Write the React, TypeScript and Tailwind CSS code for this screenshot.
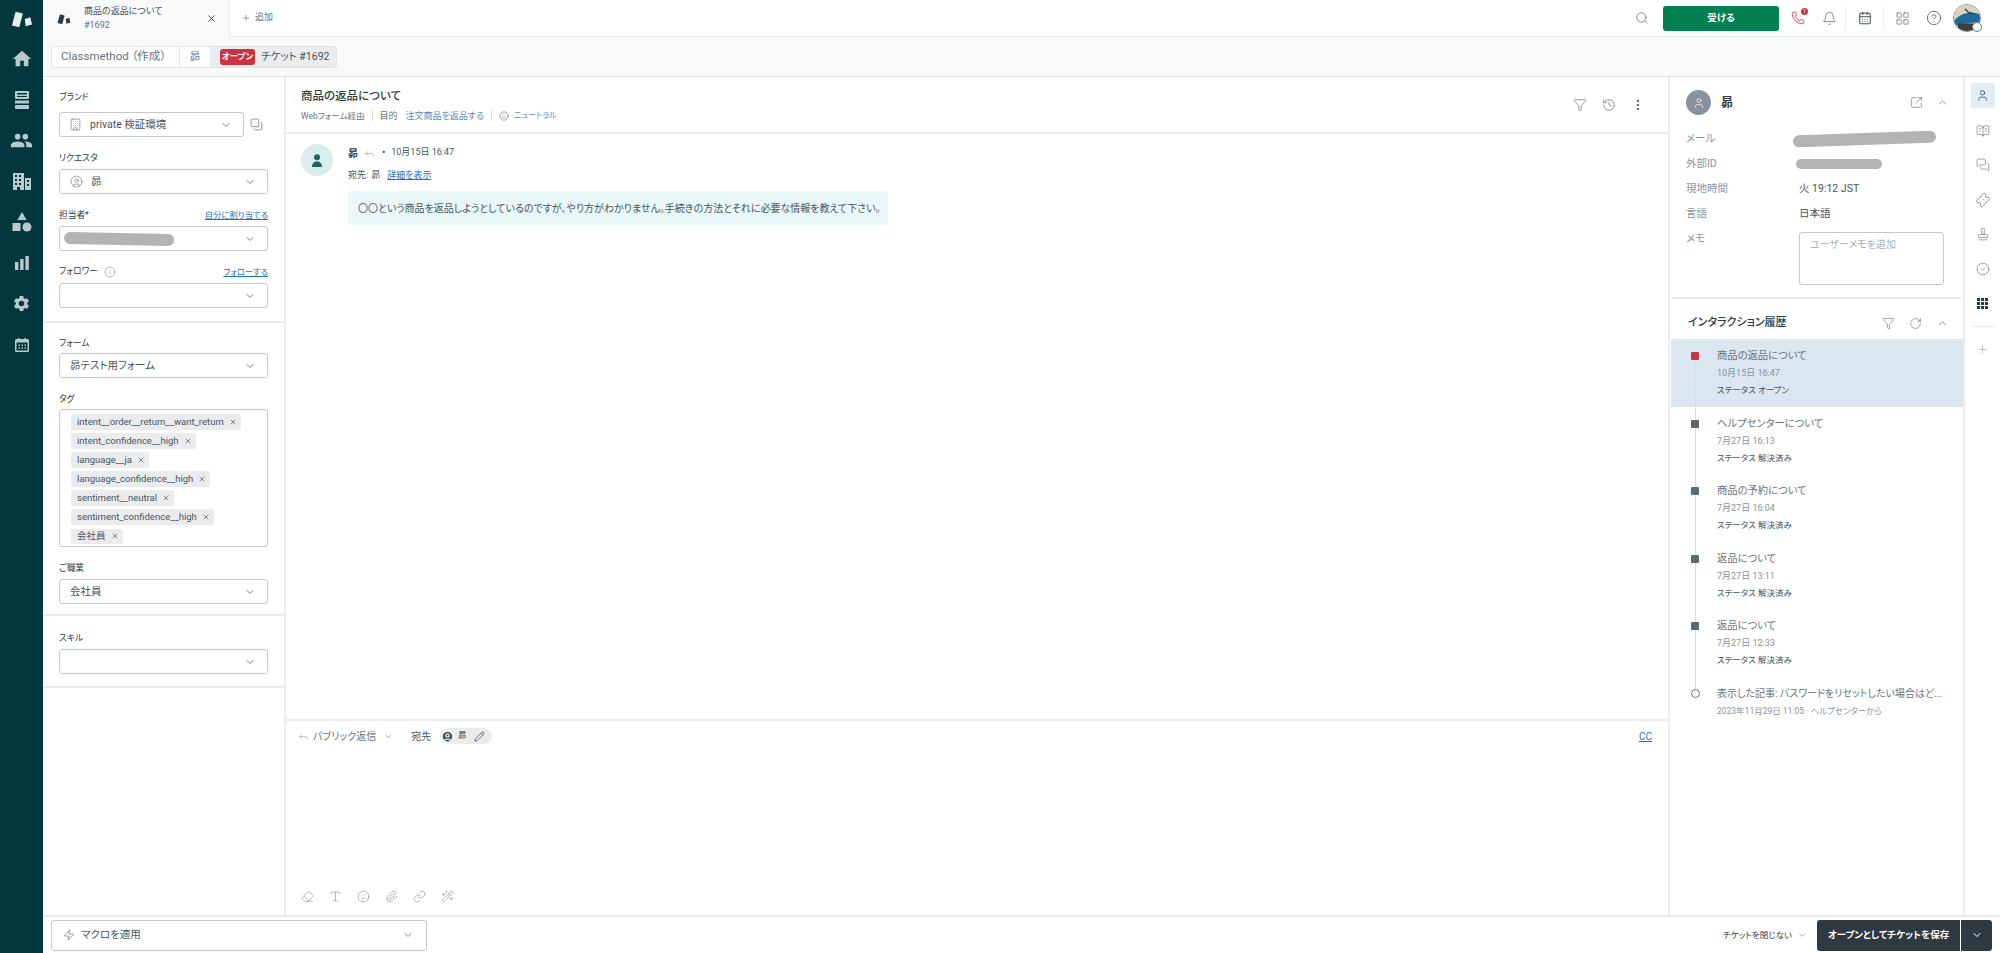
import {
  Bell,
  BookOpenText,
  Building,
  CalendarDays,
  ChevronDown,
  ChevronUp,
  CircleCheck,
  CircleHelp,
  CircleUser,
  Copy,
  EllipsisVertical,
  Eraser,
  Funnel,
  History,
  Info,
  LayoutGrid,
  Link,
  MessagesSquare,
  Paperclip,
  Pencil,
  Phone,
  Plus,
  Reply,
  RotateCw,
  Search,
  Smile,
  SquareArrowOutUpRight,
  Stamp,
  Ticket,
  Type,
  User,
  WandSparkles,
  X,
  Zap,
} from "lucide-react";
import { MdHome, MdPeople, MdSettings } from "react-icons/md";
import type { ReactNode } from "react";

const ZendeskLogo = ({ size, color }: { size: number; color: string }) => (
  <svg width={size} height={size} viewBox="0 0 24 24" fill={color}>
    <path d="M5 4 L13 6 L9 21 L1 19 Z" />
    <path d="M15 12 L21 10 L23 18 L16 20 Z" />
  </svg>
);

const NavRail = () => (
  <nav className="w-[43px] shrink-0 bg-[#03363d] flex flex-col items-center text-[#b9cacc]">
    <div className="h-[38px] flex items-center">
      <ZendeskLogo size={22} color="#e6eced" />
    </div>
    <div className="h-[41px] flex items-center">
      <MdHome size={22} />
    </div>
    <div className="h-[41px] flex items-center">
      <svg width="16" height="18" viewBox="0 0 16 18" fill="currentColor">
        <path d="M2 0h12a1 1 0 0 1 1 1v6a1 1 0 0 1-1 1H2a1 1 0 0 1-1-1V1a1 1 0 0 1 1-1zm1 2v1.500h10V2zM3 5v1h10V5z" fillRule="evenodd" />
        <rect x="1" y="9.500" width="14" height="3" />
        <rect x="1" y="14" width="14" height="4" rx="1" />
      </svg>
    </div>
    <div className="h-[41px] flex items-center">
      <MdPeople size={23} />
    </div>
    <div className="h-[41px] flex items-center">
      <svg width="18" height="17" viewBox="0 0 18 17" fill="currentColor">
        <path d="M0 0h11v17H0zM2 2v2h2V2zm4 0v2h2V2zM2 6v2h2V6zm4 0v2h2V6zM2 10v2h2v-2zm4 0v2h2v-2zM4 14v3h3v-3zM12 5h6v12h-6zm2 2v2h2V7zm0 4v2h2v-2z" fillRule="evenodd" />
      </svg>
    </div>
    <div className="h-[40px] flex items-center">
      <svg width="20" height="20" viewBox="0 0 20 20" fill="currentColor">
        <path d="M10 0l4.600 8H5.400z" />
        <rect x="0.500" y="11" width="8" height="8" rx="0.500" />
        <circle cx="15" cy="15" r="4.500" />
      </svg>
    </div>
    <div className="h-[41px] flex items-center">
      <svg width="14" height="14" viewBox="0 0 14 14" fill="currentColor">
        <rect x="0" y="6" width="3.400" height="8" />
        <rect x="5.200" y="3" width="3.400" height="11" />
        <rect x="10.400" y="0" width="3.400" height="14" />
      </svg>
    </div>
    <div className="h-[41px] flex items-center">
      <MdSettings size={19} />
    </div>
    <div className="h-[41px] flex items-center">
      <svg width="14" height="14" viewBox="0 0 14 14" fill="currentColor">
        <path d="M1.500 1H3V0h1.500v1h5V0H11v1h1.500A1.500 1.500 0 0 1 14 2.500v10a1.500 1.500 0 0 1-1.500 1.500h-11A1.500 1.500 0 0 1 0 12.500v-10A1.500 1.500 0 0 1 1.500 1zM1.500 4.500v8h11v-8zM3.500 6.500h1.500V8H3.500zm3 0H8V8H6.500zm3 0H11V8H9.500zm-6 2.800h1.500v1.500H3.500zm3 0H8v1.500H6.500zm3 0H11v1.500H9.500z" fillRule="evenodd" />
      </svg>
    </div>
  </nav>
);

const TopBar = () => (
  <header className="h-[37px] shrink-0 flex bg-white">
    <div className="w-[187px] shrink-0 bg-[#f8f9f9] border-r border-[#e9ebed] flex items-center pl-[14px] pr-[12px]">
      <ZendeskLogo size={14} color="#2f3941" />
      <div className="ml-[13px] -mt-[2px] flex-1 flex flex-col gap-[2px] text-[#49545c] leading-[12px]">
        <span className="text-[9px]">商品の返品について</span>
        <span className="text-[9px] text-[#68737d]">#1692</span>
      </div>
      <X size={11} strokeWidth={2} className="text-[#2f3941]" />
    </div>
    <div className="flex-1 flex items-center pr-[19px] border-b border-[#e9ebed]">
      <div className="ml-[11px] flex items-center gap-[4px] text-[#68737d] text-[9px]">
        <Plus size={10} strokeWidth={1.5} />
        <span>追加</span>
      </div>
      <div className="ml-auto flex items-center">
        <Search size={14} strokeWidth={1.4} className="text-[#68737d]" />
        <button className="ml-[14px] w-[116px] h-[25px] rounded-[3px] bg-[#037f52] text-white text-[9.500px] font-bold">受ける</button>
        <div className="ml-[7px] w-[24px] flex justify-center relative">
          <Phone size={14} strokeWidth={1.4} className="text-[#cc3340]" />
          <span className="absolute right-[2px] top-[-3px] w-[7px] h-[7px] rounded-full bg-[#cc3340] text-white text-[5px] leading-[7px] text-center">1</span>
        </div>
        <Bell size={15} strokeWidth={1.3} className="ml-[12px] text-[#68737d]" />
        <div className="ml-[8px] w-px h-[22px] bg-[#e9ebed]" />
        <CalendarDays size={14} strokeWidth={1.8} className="ml-[12px] text-[#49545c]" />
        <div className="ml-[11px] w-px h-[22px] bg-[#e9ebed]" />
        <LayoutGrid size={15} strokeWidth={1.2} className="ml-[11px] text-[#68737d]" />
        <CircleHelp size={16} strokeWidth={1.2} className="ml-[16px] text-[#49545c]" />
        <div className="ml-[11px] w-[28px] h-[28px] rounded-full border border-[#87929d] relative">
          <svg viewBox="0 0 28 28" className="w-full h-full rounded-full">
            <rect width="28" height="28" fill="#d8d4c4" />
            <path d="M0 17 C8 8 18 7 28 10 L28 18 L0 22Z" fill="#1f6c9b" />
            <path d="M4 20h20v8H4z" fill="#3b3f3a" />
            <path d="M12 4 C14 8 18 9 21 9" stroke="#33393c" strokeWidth="1.500" fill="none" />
          </svg>
          <span className="absolute right-[-2px] bottom-[-1px] w-[10px] h-[10px] rounded-full bg-white border border-[#68737d]" />
        </div>
      </div>
    </div>
  </header>
);

const Crumbs = () => (
  <div className="h-[40px] shrink-0 bg-[#f8f9f9] border-b border-[#e0e3e5] flex items-center pl-[8px]">
    <div className="flex h-[22px] rounded-[3px] border border-[#e0e3e5] overflow-hidden text-[#68737d] text-[10.500px] whitespace-nowrap">
      <div className="w-[128px] bg-white flex items-center pl-[9px] border-r border-[#e0e3e5] text-[11.500px]">Classmethod （作成）</div>
      <div className="w-[30px] bg-white flex items-center justify-center">昴</div>
      <div className="w-[126px] bg-[#e9ebed] flex items-center pl-[10px] gap-[6px] text-[#49545c]">
        <span className="h-[16px] w-[35px] justify-center rounded-[3px] bg-[#cc3340] text-white text-[8.500px] font-bold flex items-center">オープン</span>
        <span>チケット #1692</span>
      </div>
    </div>
  </div>
);

const SelectBox = ({ children, className = "w-[209px]" }: { children?: ReactNode; className?: string }) => (
  <div className={`h-[25px] ${className} rounded-[3px] border border-[#c2c8cc] bg-white flex items-center pl-[10px] pr-[11px] text-[10.500px] text-[#49545c]`}>
    <div className="flex-1 flex items-center gap-[8px] min-w-0">{children}</div>
    <ChevronDown size={12} strokeWidth={1.5} className="text-[#49545c]" />
  </div>
);

const FieldLabel = ({ children, action }: { children: ReactNode; action?: ReactNode }) => (
  <div className="h-[16px] flex items-center justify-between text-[8.700px] text-[#2f3941]">
    <div className="flex items-center gap-[6px]">{children}</div>
    {action && <span className="text-[#1f73b7] underline text-[8.300px]">{action}</span>}
  </div>
);

const tags = [
  "intent__order__return__want_return",
  "intent_confidence__high",
  "language__ja",
  "language_confidence__high",
  "sentiment__neutral",
  "sentiment_confidence__high",
  "会社員",
];

const TicketFields = () => (
  <aside className="w-[243px] shrink-0 border-r-2 border-[#e9ebed] flex flex-col">
    <section className="px-[16px] pt-[13px] h-[246px] border-b-2 border-[#e9ebed] flex flex-col">
      <FieldLabel>ブランド</FieldLabel>
      <div className="mt-[6px] flex items-center gap-[6px]">
        <SelectBox className="w-[185px]">
          <Building size={13} strokeWidth={1.2} className="text-[#68737d] -ml-[1px]" />
          <span>private 検証環境</span>
        </SelectBox>
        <Copy size={13} strokeWidth={1.3} className="text-[#68737d] -scale-x-100 -scale-y-100" />
      </div>
      <div className="mt-[13.500px]">
        <FieldLabel>リクエスタ</FieldLabel>
      </div>
      <div className="mt-[2.500px]">
        <SelectBox>
          <CircleUser size={13} strokeWidth={1.2} className="text-[#68737d]" />
          <span>昴</span>
        </SelectBox>
      </div>
      <div className="mt-[13.500px]">
        <FieldLabel action="自分に割り当てる">担当者*</FieldLabel>
      </div>
      <div className="mt-[2.500px]">
        <SelectBox>
          <div className="-ml-[6px] w-[110px] h-[12px] rounded-full bg-[#b3b3b3] rotate-[1.2deg]" />
        </SelectBox>
      </div>
      <div className="mt-[13px]">
        <FieldLabel action="フォローする">
          <span>フォロワー</span>
          <Info size={12} strokeWidth={1.2} className="text-[#87929d]" />
        </FieldLabel>
      </div>
      <div className="mt-[3px]">
        <SelectBox />
      </div>
    </section>
    <section className="px-[16px] pt-[13px] h-[293px] border-b-2 border-[#e9ebed] flex flex-col">
      <FieldLabel>フォーム</FieldLabel>
      <div className="mt-[1px]">
        <SelectBox>昴テスト用フォーム</SelectBox>
      </div>
      <div className="mt-[14px]">
        <FieldLabel>タグ</FieldLabel>
      </div>
      <div className="mt-[1px] w-[209px] h-[138px] rounded-[3px] border border-[#c2c8cc] pl-[11px] pt-[4px] flex flex-col items-start gap-[3.600px]">
        {tags.map((tag) => (
          <div key={tag} className="h-[15.500px] pl-[6px] pr-[4px] bg-[#e9ebed] rounded-[2px] flex items-center gap-[5px] text-[9.500px] text-[#49545c]">
            <span>{tag}</span>
            <X size={8} strokeWidth={2} />
          </div>
        ))}
      </div>
      <div className="mt-[14px]">
        <FieldLabel>ご職業</FieldLabel>
      </div>
      <div className="mt-[2px]">
        <SelectBox>会社員</SelectBox>
      </div>
    </section>
    <section className="px-[16px] pt-[15px] h-[72px] border-b-2 border-[#e9ebed] flex flex-col">
      <FieldLabel>スキル</FieldLabel>
      <div className="mt-[2px]">
        <SelectBox />
      </div>
    </section>
  </aside>
);

const Conversation = () => (
  <main className="flex-1 min-w-0 flex flex-col">
    <div className="h-[57px] shrink-0 border-b-2 border-[#e9ebed] pl-[15px] pr-[23px] flex items-center">
      <div className="flex-1 flex flex-col gap-[4px]">
        <div className="text-[11.500px] font-medium text-[#2f3941] leading-[18px]">商品の返品について</div>
        <div className="flex items-center text-[9px] text-[#68737d] leading-[14px]">
          <span className="text-[8.500px]">Webフォーム経由</span>
          <div className="mx-[7px] w-px h-[11px] bg-[#d8dcde]" />
          <span>目的</span>
          <span className="ml-[8px] text-[#5589c4]">注文商品を返品する</span>
          <div className="mx-[7px] w-px h-[11px] bg-[#d8dcde]" />
          <Smile size={10} strokeWidth={1.3} className="text-[#49545c]" />
          <span className="ml-[5px] text-[#5589c4] text-[8px]">ニュートラル</span>
        </div>
      </div>
      <div className="flex items-center text-[#68737d] gap-[15px]">
        <Funnel size={14} strokeWidth={1.2} />
        <History size={14} strokeWidth={1.3} />
        <EllipsisVertical size={14} strokeWidth={1.8} className="text-[#49545c]" />
      </div>
    </div>
    <div className="flex-1 min-h-0 pl-[15px] pt-[10px] flex">
      <div className="w-[32px] h-[32px] rounded-full bg-[#d9edec] flex items-center justify-center">
        <svg width="12" height="13" viewBox="0 0 12 13" fill="#21655f">
          <circle cx="6" cy="3.200" r="3" />
          <path d="M1 13c0-3.600 2-5.500 5-5.500s5 1.900 5 5.500z" />
        </svg>
      </div>
      <div className="ml-[15px]">
        <div className="mt-[1px] h-[16px] flex items-center text-[9px] text-[#49545c]">
          <span className="text-[10px] font-bold text-[#2f3941]">昴</span>
          <Reply size={11} strokeWidth={1.2} className="ml-[6px] text-[#87929d]" />
          <span className="ml-[7px] font-bold">•</span>
          <span className="ml-[6px]">10月15日 16:47</span>
        </div>
        <div className="mt-[7px] h-[16px] flex items-center text-[9px] text-[#49545c]">
          <span>宛先:</span>
          <span className="ml-[3px]">昴</span>
          <span className="ml-[7px] text-[#1f73b7] underline">詳細を表示</span>
        </div>
        <div className="mt-[7px] h-[34px] w-[540px] rounded-[3px] bg-[#eaf7f8] flex items-center pl-[10px] text-[10px] text-[#49545c] whitespace-nowrap">
          〇〇という商品を返品しようとしているのですが、やり方がわかりません。手続きの方法とそれに必要な情報を教えて下さい。
        </div>
      </div>
    </div>
    <div className="h-[196px] shrink-0 border-t-2 border-[#e9ebed] flex flex-col">
      <div className="h-[30px] flex items-center pl-[12px] pr-[16px] text-[10px] text-[#68737d]">
        <Reply size={11} strokeWidth={1.2} className="text-[#87929d]" />
        <span className="ml-[4px]">パブリック返信</span>
        <ChevronDown size={9} strokeWidth={1.5} className="ml-[8px]" />
        <span className="ml-[18px] text-[#49545c]">宛先</span>
        <div className="ml-[9px] h-[16px] w-[52px] rounded-full bg-[#e9ebed] flex items-center pl-[1px] gap-[4px] text-[8px] text-[#2f3941]">
          <CircleUser size={13} strokeWidth={2} className="text-white fill-[#49545c]" />
          <span>昴</span>
          <Pencil size={11} strokeWidth={1.4} className="ml-[4px]" />
        </div>
        <span className="ml-auto text-[#1f73b7] underline">CC</span>
      </div>
      <div className="mt-auto h-[25px] flex items-start pl-[15px] gap-[15px] text-[#87929d]">
        <Eraser size={13} strokeWidth={1.2} />
        <Type size={13} strokeWidth={1.2} />
        <Smile size={13} strokeWidth={1.2} />
        <Paperclip size={13} strokeWidth={1.2} />
        <Link size={13} strokeWidth={1.2} />
        <WandSparkles size={13} strokeWidth={1.2} />
      </div>
    </div>
  </main>
);

const InfoRow = ({ label, children }: { label: string; children?: ReactNode }) => (
  <div className="h-[25px] flex items-center text-[10.500px]">
    <span className="w-[113px] shrink-0 text-[#87929d]">{label}</span>
    <div className="flex-1 text-[#49545c] min-w-0">{children}</div>
  </div>
);

const history = [
  { title: "商品の返品について", date: "10月15日 16:47", status: "ステータス オープン", active: true },
  { title: "ヘルプセンターについて", date: "7月27日 16:13", status: "ステータス 解決済み" },
  { title: "商品の予約について", date: "7月27日 16:04", status: "ステータス 解決済み" },
  { title: "返品について", date: "7月27日 13:11", status: "ステータス 解決済み" },
  { title: "返品について", date: "7月27日 12:33", status: "ステータス 解決済み" },
];

const Timeline = () => (
  <div className="ml-[1px]">
    {history.map((item, i) => (
      <div key={i} className={`h-[67.500px] flex ${item.active ? "bg-[#dbe6f1]" : ""}`}>
        <div className="w-[46px] shrink-0 flex flex-col items-start pl-[20px]">
          <div className={`h-[13px] w-px ml-[3.500px] ${i === 0 ? "" : "bg-[#d8dcde]"}`} />
          <div className={`w-[8px] h-[8px] rounded-[1px] ${item.active ? "bg-[#cc3340]" : "bg-[#5c6970]"}`} />
          <div className="flex-1 w-px ml-[3.500px] bg-[#d8dcde]" />
        </div>
        <div className="pt-[9px] flex flex-col gap-[1px]">
          <span className="h-[16px] text-[10.300px] leading-[16px] text-[#68737d]">{item.title}</span>
          <span className="h-[16px] text-[9px] leading-[16px] text-[#87929d]">{item.date}</span>
          <span className="h-[16px] text-[8.500px] leading-[16px] text-[#49545c]">{item.status}</span>
        </div>
      </div>
    ))}
    <div className="h-[50px] flex">
      <div className="w-[46px] shrink-0 flex flex-col items-start pl-[20px]">
        <div className="h-[12px] w-px ml-[3.500px] bg-[#d8dcde]" />
        <div className="w-[9px] h-[9px] rounded-full border border-[#68737d]" />
      </div>
      <div className="pt-[9px] flex flex-col gap-[1px]">
        <span className="h-[16px] text-[10px] leading-[16px] text-[#68737d] whitespace-nowrap">表示した記事: パスワードをリセットしたい場合はど...</span>
        <span className="h-[16px] text-[8.500px] leading-[16px] text-[#87929d] whitespace-nowrap">2023年11月29日 11:05 · ヘルプセンターから</span>
      </div>
    </div>
  </div>
);

const CustomerPanel = () => (
  <aside className="w-[297px] shrink-0 border-l-2 border-r-2 border-[#e9ebed] flex flex-col">
    <div className="pt-[13px] pl-[16px] pr-[14px] h-[220px] flex flex-col">
      <div className="h-[25px] flex items-center">
        <div className="w-[25px] h-[25px] rounded-full bg-[#87929d] flex items-center justify-center">
          <User size={12} strokeWidth={1.4} className="text-white" />
        </div>
        <span className="ml-[10px] text-[12px] font-bold text-[#2f3941]">昴</span>
        <SquareArrowOutUpRight size={13} strokeWidth={1.2} className="ml-auto text-[#68737d]" />
        <ChevronUp size={13} strokeWidth={1.4} className="ml-[13px] text-[#68737d]" />
      </div>
      <div className="mt-[11px] flex flex-col">
        <InfoRow label="メール">
          <div className="w-[143px] h-[12px] -ml-[6px] rounded-full bg-[#b3b3b3] -rotate-[2deg]" />
        </InfoRow>
        <InfoRow label="外部ID">
          <div className="w-[86px] h-[10px] -ml-[3px] rounded-full bg-[#b3b3b3]" />
        </InfoRow>
        <InfoRow label="現地時間">火 19:12 JST</InfoRow>
        <InfoRow label="言語">日本語</InfoRow>
        <div className="flex mt-[6px]">
          <span className="w-[113px] shrink-0 pt-[1px] text-[10.500px] leading-[12px] text-[#87929d]">メモ</span>
          <div className="w-[145px] h-[53px] rounded-[3px] border border-[#c2c8cc] pl-[10px] pt-[4px] text-[10px] text-[#a8adb2]">ユーザーメモを追加</div>
        </div>
      </div>
    </div>
    <div className="h-[42px] mx-[2px] pt-[8px] border-t-2 border-[#e9ebed] flex items-center pl-[16px] pr-[12px]">
      <span className="text-[11px] font-medium text-[#2f3941]">インタラクション履歴</span>
      <Funnel size={13} strokeWidth={1.2} className="ml-auto text-[#68737d]" />
      <RotateCw size={13} strokeWidth={1.2} className="ml-[14px] text-[#68737d]" />
      <ChevronUp size={13} strokeWidth={1.4} className="ml-[14px] text-[#68737d]" />
    </div>
    <Timeline />
  </aside>
);

const ToolRail = () => (
  <div className="w-[35px] shrink-0 flex flex-col items-center text-[#68737d] pt-[6px]">
    <div className="w-[24px] h-[25px] rounded-[3px] bg-[#e3ecf5] flex items-center justify-center text-[#2f3941]">
      <User size={13} strokeWidth={1.3} />
    </div>
    <div className="h-[34px] mt-[6px] flex items-center"><BookOpenText size={14} strokeWidth={1.1} /></div>
    <div className="h-[34px] flex items-center"><MessagesSquare size={14} strokeWidth={1.1} /></div>
    <div className="h-[35px] flex items-center"><Ticket size={14} strokeWidth={1.2} className="-rotate-45" /></div>
    <div className="h-[34px] flex items-center"><Stamp size={14} strokeWidth={1.1} /></div>
    <div className="h-[35px] flex items-center"><CircleCheck size={14} strokeWidth={1.1} /></div>
    <div className="h-[34px] flex items-center">
      <svg width="11" height="11" viewBox="0 0 11 11" fill="#2f3941">
        <rect x="0" y="0" width="3" height="3" />
        <rect x="4" y="0" width="3" height="3" />
        <rect x="8" y="0" width="3" height="3" />
        <rect x="0" y="4" width="3" height="3" />
        <rect x="4" y="4" width="3" height="3" />
        <rect x="8" y="4" width="3" height="3" />
        <rect x="0" y="8" width="3" height="3" />
        <rect x="4" y="8" width="3" height="3" />
        <rect x="8" y="8" width="3" height="3" />
      </svg>
    </div>
    <div className="mt-[6px] w-[24px] h-px bg-[#e9ebed]" />
    <Plus size={13} strokeWidth={1} className="mt-[16px] text-[#87929d]" />
  </div>
);

const Footer = () => (
  <footer className="h-[38px] shrink-0 border-t-2 border-[#e9ebed] flex items-center pl-[8px] pr-[8px]">
    <div className="w-[376px] h-[31px] rounded-[3px] border border-[#c2c8cc] flex items-center pl-[11px] pr-[12px] text-[10.500px] text-[#49545c]">
      <Zap size={12} strokeWidth={1.2} />
      <span className="ml-[6px] flex-1">マクロを適用</span>
      <ChevronDown size={12} strokeWidth={1.5} />
    </div>
    <span className="ml-auto text-[8.500px] text-[#2f3941]">チケットを閉じない</span>
    <ChevronDown size={10} strokeWidth={1.3} className="ml-[5px] text-[#49545c]" />
    <div className="ml-[10px] flex gap-px h-[31px]">
      <button className="w-[143px] rounded-l-[3px] bg-[#2f3941] text-white text-[9.500px] font-bold">オープンとしてチケットを保存</button>
      <button className="w-[31px] rounded-r-[3px] bg-[#2f3941] text-white flex items-center justify-center">
        <ChevronDown size={12} strokeWidth={2} />
      </button>
    </div>
  </footer>
);

export default function App() {
  return (
    <div className="w-[2000px] h-[953px] overflow-hidden flex bg-white font-['Roboto','Noto_Sans_CJK_JP',sans-serif] [font-feature-settings:'palt']">
      <NavRail />
      <div className="flex-1 min-w-0 flex flex-col">
        <TopBar />
        <Crumbs />
        <div className="flex-1 min-h-0 flex">
          <TicketFields />
          <Conversation />
          <CustomerPanel />
          <ToolRail />
        </div>
        <Footer />
      </div>
    </div>
  );
}
